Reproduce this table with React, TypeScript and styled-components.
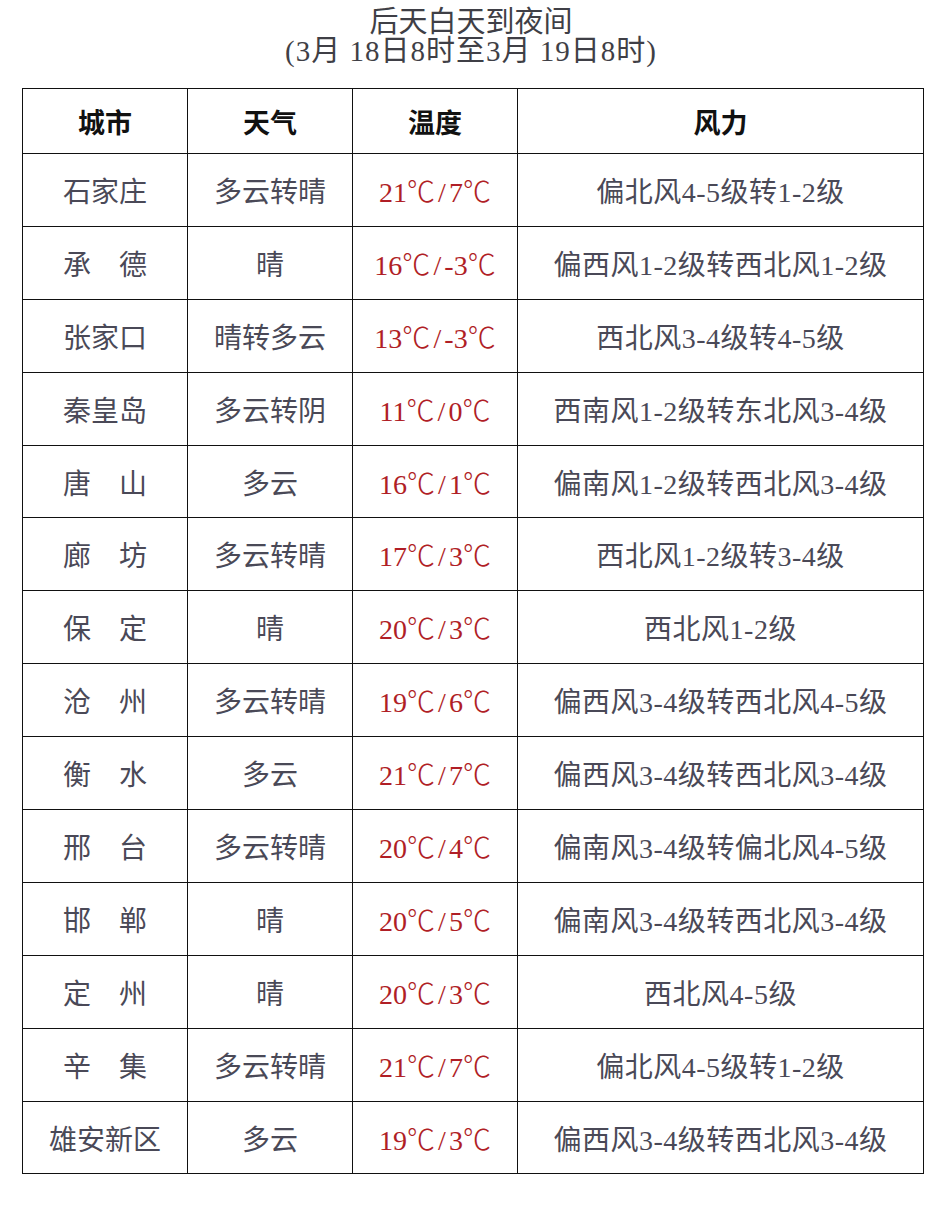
import React from "react";
import styled, { createGlobalStyle } from "styled-components";

const Global = createGlobalStyle`
  html, body { margin: 0; padding: 0; background: #ffffff; }
  body { font-family: "Liberation Serif", "Noto Sans CJK SC", serif; }
`;

const Page = styled.div`
  width: 942px;
  height: 1218px;
  background: #ffffff;
  padding-top: 8px;
  box-sizing: border-box;
`;

const Title = styled.div<{ $wide?: boolean }>`
  text-align: center;
  color: #3f3f46;
  font-size: 29px;
  line-height: 29px;
  letter-spacing: ${(p) => (p.$wide ? "1px" : "0")};
  white-space: pre;
  font-family: "Liberation Serif", "Noto Sans CJK SC", serif;
`;

const Sheet = styled.table`
  margin: 22px 0 0 22px;
  width: 901px;
  border-collapse: collapse;
  table-layout: fixed;
`;

const HeadCell = styled.th`
  height: 64px;
  border: 1.5px solid #111;
  font-size: 27px;
  font-weight: 700;
  color: #111;
  text-align: center;
  padding: 0;
  font-family: "Liberation Serif", "Noto Sans CJK SC", serif;
`;

const Cell = styled.td<{ $red?: boolean; $spaced?: boolean }>`
  height: 71.9px;
  border: 1.5px solid #111;
  font-size: 28px;
  color: ${(p) => (p.$red ? "#b01e26" : "#4a4957")};
  letter-spacing: ${(p) => (p.$spaced ? "0.5px" : "0")};
  text-align: center;
  padding: 0;
  white-space: nowrap;
  font-family: "Liberation Serif", "Noto Sans CJK SC", serif;
`;

const Degree = styled.span`
  display: inline-block;
  width: 1em;
  text-align: center;
  font-family: "Noto Sans CJK SC", sans-serif;
  font-weight: 300;
`;

const Slash = styled.span`
  display: inline-block;
  width: 0.5em;
  text-align: center;
`;

const rows: [string, string, string, string, string][] = [
  ["石家庄", "多云转晴", "21", "7", "偏北风4-5级转1-2级"],
  ["承　德", "晴", "16", "-3", "偏西风1-2级转西北风1-2级"],
  ["张家口", "晴转多云", "13", "-3", "西北风3-4级转4-5级"],
  ["秦皇岛", "多云转阴", "11", "0", "西南风1-2级转东北风3-4级"],
  ["唐　山", "多云", "16", "1", "偏南风1-2级转西北风3-4级"],
  ["廊　坊", "多云转晴", "17", "3", "西北风1-2级转3-4级"],
  ["保　定", "晴", "20", "3", "西北风1-2级"],
  ["沧　州", "多云转晴", "19", "6", "偏西风3-4级转西北风4-5级"],
  ["衡　水", "多云", "21", "7", "偏西风3-4级转西北风3-4级"],
  ["邢　台", "多云转晴", "20", "4", "偏南风3-4级转偏北风4-5级"],
  ["邯　郸", "晴", "20", "5", "偏南风3-4级转西北风3-4级"],
  ["定　州", "晴", "20", "3", "西北风4-5级"],
  ["辛　集", "多云转晴", "21", "7", "偏北风4-5级转1-2级"],
  ["雄安新区", "多云", "19", "3", "偏西风3-4级转西北风3-4级"],
];

export default function App() {
  return (
    <Page>
      <Global />
      <Title>后天白天到夜间</Title>
      <Title $wide>(3月 18日8时至3月 19日8时)</Title>
      <Sheet>
        <colgroup>
          <col style={{ width: 165 }} />
          <col style={{ width: 165 }} />
          <col style={{ width: 165 }} />
          <col style={{ width: 406 }} />
        </colgroup>
        <thead>
          <tr>
            <HeadCell>城市</HeadCell>
            <HeadCell>天气</HeadCell>
            <HeadCell>温度</HeadCell>
            <HeadCell>风力</HeadCell>
          </tr>
        </thead>
        <tbody>
          {rows.map((r) => (
            <tr key={r[0]}>
              <Cell>{r[0]}</Cell>
              <Cell>{r[1]}</Cell>
              <Cell $red>
                {r[2]}
                <Degree>℃</Degree>
                <Slash>/</Slash>
                {r[3]}
                <Degree>℃</Degree>
              </Cell>
              <Cell $spaced>{r[4]}</Cell>
            </tr>
          ))}
        </tbody>
      </Sheet>
    </Page>
  );
}
